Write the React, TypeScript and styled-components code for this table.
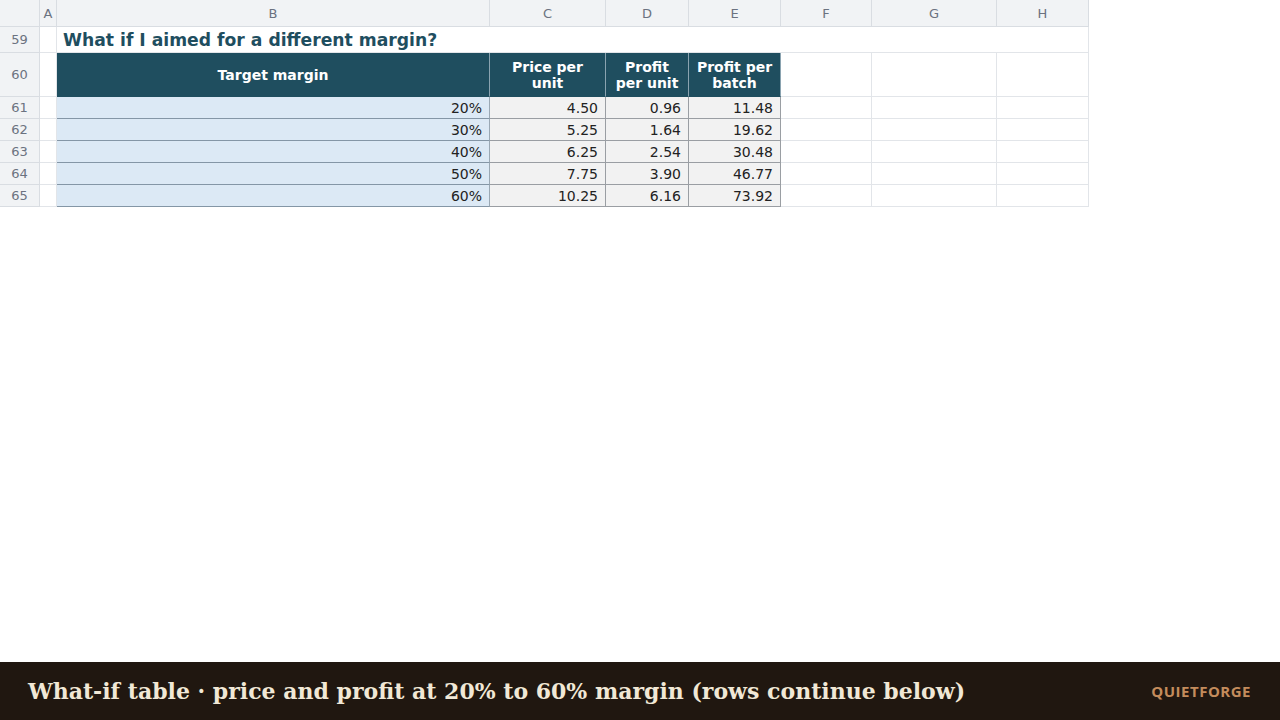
import React from 'react'
import styled, { createGlobalStyle } from 'styled-components'

const GlobalStyle = createGlobalStyle`
  html, body {
    margin: 0;
    padding: 0;
    background: #ffffff;
  }
  * {
    box-sizing: border-box;
  }
`

const Page = styled.div`
  width: 1280px;
  height: 720px;
  display: flex;
  flex-direction: column;
  font-family: "DejaVu Sans", "Liberation Sans", sans-serif;
  overflow: hidden;
`

const Sheet = styled.div`
  flex: 1;
`

const Grid = styled.div`
  display: grid;
  grid-template-columns: 40px 17px 433px 116px 83px 92px 91px 125px 92px;
  grid-template-rows: 27px 26px 44px repeat(5, 22px);
  width: 1089px;
`

const Cell = styled.div<{ $span?: number }>`
  border-right: 1px solid #e2e5e9;
  border-bottom: 1px solid #e2e5e9;
  grid-column: ${p => (p.$span ? `span ${p.$span}` : 'auto')};
  min-width: 0;
`

const Corner = styled(Cell)`
  background: #f1f3f5;
  border-color: #d9dde2;
`

const ColHead = styled(Cell)`
  background: #f1f3f5;
  border-color: #d9dde2;
  display: flex;
  align-items: center;
  justify-content: center;
  font-size: 13px;
  color: #6b7280;
`

const RowHead = styled(Cell)`
  background: #f1f3f5;
  border-color: #d9dde2;
  display: flex;
  align-items: center;
  justify-content: center;
  font-size: 13px;
  color: #6b7280;
`

const Title = styled(Cell)`
  display: flex;
  align-items: center;
  padding-left: 6px;
  font-size: 17.2px;
  font-weight: bold;
  color: #1f4e5f;
`

const HeadCell = styled(Cell)`
  background: #1f4e5f;
  border-right-color: #8aa3b0;
  border-bottom-color: #1f4e5f;
  display: flex;
  align-items: center;
  justify-content: center;
  text-align: center;
  color: #ffffff;
  font-size: 14px;
  font-weight: bold;
  line-height: 16px;
`

const DataCell = styled(Cell)<{ $tone: 'blue' | 'grey' }>`
  background: ${p => (p.$tone === 'blue' ? '#dce9f5' : '#f2f2f2')};
  border-right-color: ${p => (p.$tone === 'blue' ? '#9aa8b4' : '#9a9ea3')};
  border-bottom-color: ${p => (p.$tone === 'blue' ? '#8496a6' : '#9a9ea3')};
  display: flex;
  align-items: center;
  justify-content: flex-end;
  padding-right: 7px;
  font-size: 14px;
  color: #222222;
`

const Footer = styled.footer`
  height: 58px;
  background: #201710;
  display: flex;
  align-items: center;
  justify-content: space-between;
  padding: 0 29px 0 28px;
`

const Caption = styled.div`
  font-family: "DejaVu Serif", "Liberation Serif", serif;
  font-weight: bold;
  font-size: 22px;
  color: #f1e8d6;
`

const Brand = styled.div`
  font-family: "Open Sans", "Noto Sans", sans-serif;
  font-weight: bold;
  font-size: 15px;
  letter-spacing: 0.5px;
  color: #c48c5c;
`

const rows = [
  { n: 61, margin: '20%', price: '4.50', unit: '0.96', batch: '11.48' },
  { n: 62, margin: '30%', price: '5.25', unit: '1.64', batch: '19.62' },
  { n: 63, margin: '40%', price: '6.25', unit: '2.54', batch: '30.48' },
  { n: 64, margin: '50%', price: '7.75', unit: '3.90', batch: '46.77' },
  { n: 65, margin: '60%', price: '10.25', unit: '6.16', batch: '73.92' },
]

const cols = ['A', 'B', 'C', 'D', 'E', 'F', 'G', 'H']

export default function App() {
  return (
    <Page>
      <GlobalStyle />
      <Sheet>
        <Grid>
          <Corner />
          {cols.map(c => (
            <ColHead key={c}>{c}</ColHead>
          ))}

          <RowHead>59</RowHead>
          <Cell />
          <Title $span={7}>What if I aimed for a different margin?</Title>

          <RowHead>60</RowHead>
          <Cell />
          <HeadCell>Target margin</HeadCell>
          <HeadCell>Price per<br />unit</HeadCell>
          <HeadCell>Profit<br />per unit</HeadCell>
          <HeadCell>Profit per<br />batch</HeadCell>
          <Cell />
          <Cell />
          <Cell />

          {rows.map(r => (
            <React.Fragment key={r.n}>
              <RowHead>{r.n}</RowHead>
              <Cell />
              <DataCell $tone="blue">{r.margin}</DataCell>
              <DataCell $tone="grey">{r.price}</DataCell>
              <DataCell $tone="grey">{r.unit}</DataCell>
              <DataCell $tone="grey">{r.batch}</DataCell>
              <Cell />
              <Cell />
              <Cell />
            </React.Fragment>
          ))}
        </Grid>
      </Sheet>
      <Footer>
        <Caption>What-if table · price and profit at 20% to 60% margin (rows continue below)</Caption>
        <Brand>QUIETFORGE</Brand>
      </Footer>
    </Page>
  )
}
